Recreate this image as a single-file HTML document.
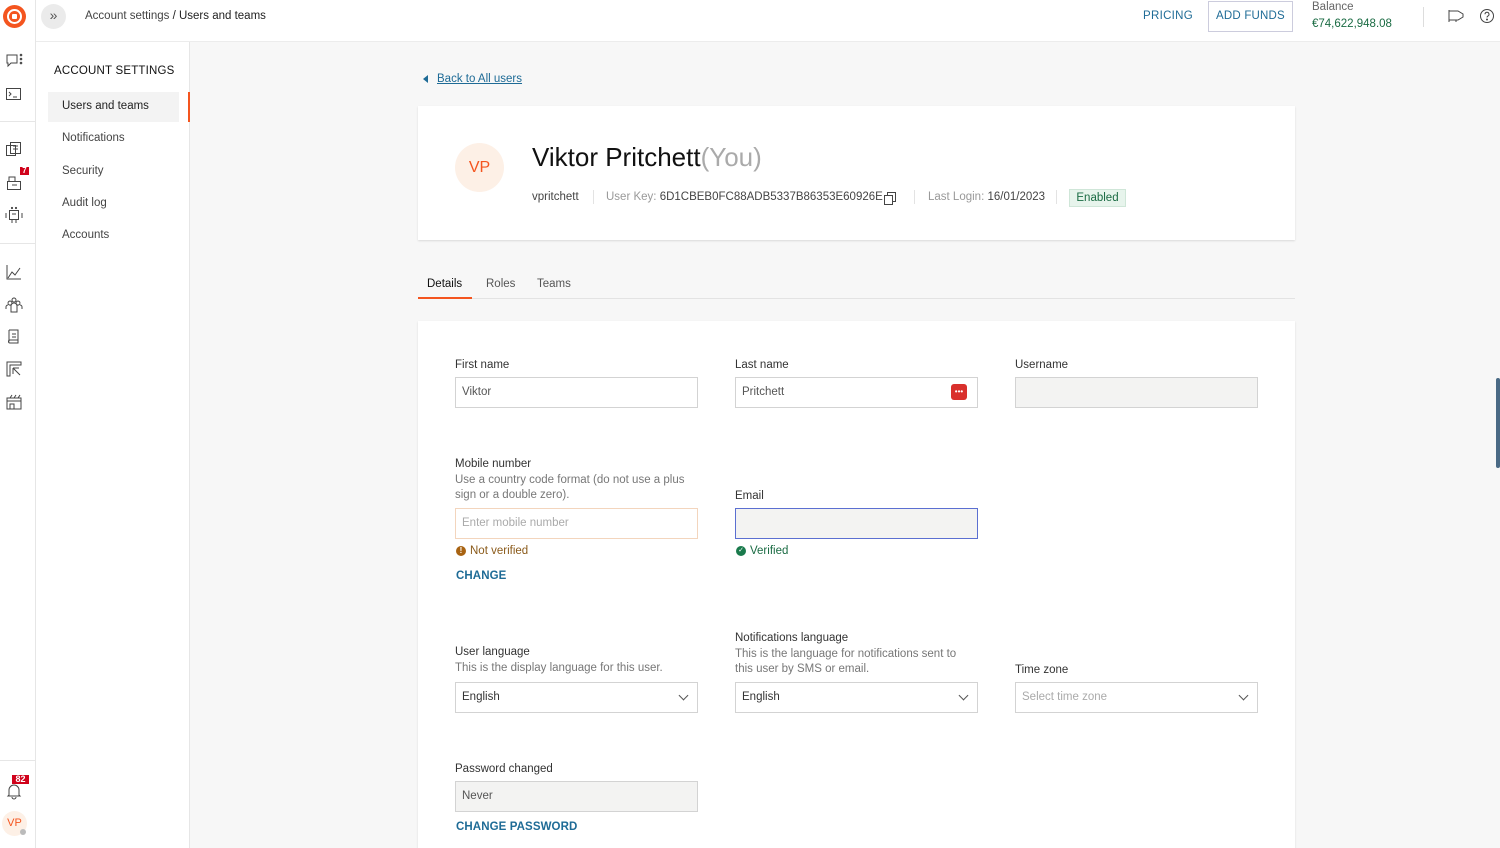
<!DOCTYPE html>
<html style="overflow:hidden"><head><meta charset="utf-8"><style>
*{box-sizing:border-box;margin:0;padding:0}
html,body{width:1500px;height:848px;overflow:hidden}
body{background:#f7f7f7;font-family:"Liberation Sans",sans-serif;color:#222;position:relative;font-size:11.5px}
.a{position:absolute}
.rail{left:0;top:0;width:36px;height:848px;background:#fff;border-right:1px solid #e6e6e6}
.top{left:36px;top:0;width:1464px;height:42px;background:#fff;border-bottom:1px solid #ececec}
.side{left:36px;top:42px;width:154px;height:806px;background:#fff;border-right:1px solid #e6e6e6}
.card{background:#fff;box-shadow:0 1px 2px rgba(0,0,0,.12)}
.lbl{font-size:11.5px;color:#333}
.hint{font-size:11.5px;color:#777;line-height:15px}
.inp{height:31px;border:1px solid #d3d3d3;background:#fff;font-size:11.5px;color:#555;padding:0 6px;line-height:29px}
.dis{background:#f3f3f2}
.link{color:#1e6b96;font-size:11.5px;font-weight:bold;letter-spacing:.1px}
.chev{position:absolute;right:10px;top:9px;width:7px;height:7px;border-right:1px solid #555;border-bottom:1px solid #555;transform:rotate(45deg)}
svg{position:absolute}
</style></head><body>
<div class="a rail"></div>
<div class="a top"></div>
<div class="a side"></div>
<div class="a" style="left:3px;top:5px;width:23px;height:23px;border-radius:50%;background:#f4551f"></div>
<div class="a" style="left:7px;top:9px;width:15px;height:15px;border-radius:50%;background:#fff"></div>
<div class="a" style="left:9px;top:11px;width:11px;height:11px;border-radius:50%;background:#f4551f"></div>
<div class="a" style="left:12px;top:14px;width:5px;height:5px;border-radius:1px;background:#fff"></div>
<svg style="left:5px;top:52px" width="20" height="18" fill="none" stroke="#444" stroke-width="1"><path d="M2 3h10v8H6l-3 3v-3H2z"/><circle cx="16" cy="3" r=".8"/><circle cx="16" cy="7" r=".8"/><circle cx="16" cy="11" r=".8"/></svg>
<svg style="left:5px;top:86px" width="18" height="16" fill="none" stroke="#444" stroke-width="1"><rect x="1.5" y="2.5" width="14" height="11"/><path d="M4 6l2 2-2 2M8 11h4"/></svg>
<div class="a" style="left:0;top:121px;width:35px;border-top:1px solid #e6e6e6"></div>
<svg style="left:5px;top:141px" width="18" height="18" fill="none" stroke="#444" stroke-width="1"><rect x="1.5" y="4.5" width="9" height="10"/><rect x="5.5" y="1.5" width="10" height="11"/><path d="M8 5h5M8 8h5"/></svg>
<svg style="left:5px;top:174px" width="18" height="18" fill="none" stroke="#444" stroke-width="1"><rect x="2.5" y="7.5" width="13" height="8"/><path d="M4 7V3h6v4M7 11h5"/></svg>
<div class="a" style="left:20px;top:167px;width:9px;height:8px;background:#d0021b;color:#fff;font-size:8px;font-weight:bold;line-height:8px;text-align:center">7</div>
<svg style="left:4px;top:205px" width="20" height="20" fill="none" stroke="#444" stroke-width="1"><rect x="5.5" y="5.5" width="9" height="9"/><path d="M2 8v5M18 8v5M8 15v3M12 15v3M8 9h4"/><circle cx="8" cy="3" r=".6"/><circle cx="12" cy="3" r=".6"/></svg>
<div class="a" style="left:0;top:243px;width:35px;border-top:1px solid #e6e6e6"></div>
<svg style="left:5px;top:263px" width="18" height="18" fill="none" stroke="#444" stroke-width="1"><path d="M2 2v14h14M3 15l4-6 3 3 5-7"/></svg>
<svg style="left:4px;top:296px" width="20" height="18" fill="none" stroke="#444" stroke-width="1"><circle cx="10" cy="4" r="2"/><path d="M7 16v-6a3 3 0 016 0v6zM4 7a2 2 0 110 .1M2 13v-2a2 2 0 012-2M16 7a2 2 0 100 .1M18 13v-2a2 2 0 00-2-2"/></svg>
<svg style="left:5px;top:328px" width="18" height="18" fill="none" stroke="#444" stroke-width="1"><path d="M4 2h9v13H5a1.5 1.5 0 010-3h8M4 2v11.5M7 6h4M7 9h4"/></svg>
<svg style="left:5px;top:360px" width="18" height="18" fill="none" stroke="#444" stroke-width="1"><path d="M2 2h14v3H5v11H2zM8 8h6M8 8v6M8 8l7 7"/></svg>
<svg style="left:5px;top:393px" width="18" height="18" fill="none" stroke="#444" stroke-width="1"><path d="M2 5h14v11H2zM2 8h14M5 16v-5h4v5M5 5l2-3M9 5l2-3M13 5l2-3"/></svg>
<div class="a" style="left:0;top:760px;width:35px;border-top:1px solid #e6e6e6"></div>
<svg style="left:6px;top:782px" width="16" height="18" fill="none" stroke="#444" stroke-width="1"><path d="M3 13V8a5 5 0 0110 0v5l1 1H2zM6 15a2 2 0 004 0"/></svg>
<div class="a" style="left:12px;top:775px;width:17px;height:9px;background:#d0021b;color:#fff;font-size:9px;font-weight:bold;line-height:9px;text-align:center">82</div>
<div class="a" style="left:2px;top:811px;width:25px;height:25px;border-radius:50%;background:#fdf0e6;color:#f4551f;font-size:11px;text-align:center;line-height:25px">VP</div>
<div class="a" style="left:20px;top:829px;width:6px;height:6px;border-radius:50%;background:#bbb"></div>
<div class="a" style="left:41px;top:4px;width:25px;height:25px;border-radius:50%;background:#ebebeb;color:#555;font-size:14px;text-align:center;line-height:23px">»</div>
<div class="a" style="left:85px;top:10px;font-size:11.5px;color:#444">Account settings <span style="color:#222">/ Users and teams</span></div>
<div class="a link" style="left:1143px;top:10px;font-weight:normal;letter-spacing:.3px">PRICING</div>
<div class="a" style="left:1208px;top:1px;width:85px;height:31px;border:1px solid #ccd;color:#1e6b96;font-size:11.5px;text-align:center;line-height:29px;letter-spacing:.2px">ADD FUNDS</div>
<div class="a" style="left:1312px;top:1px;font-size:11.5px;color:#666">Balance</div>
<div class="a" style="left:1312px;top:18px;font-size:11.5px;color:#1a6b43">€74,622,948.08</div>
<div class="a" style="left:1423px;top:7px;height:20px;border-left:1px solid #ddd"></div>
<svg style="left:1447px;top:8px" width="18" height="16" fill="none" stroke="#444" stroke-width="1"><path d="M2 2v12M2 3h9l5 3v3l-5 3H2M9 12v2"/></svg>
<svg style="left:1479px;top:8px" width="16" height="16" fill="none" stroke="#444" stroke-width="1"><circle cx="8" cy="8" r="6.5"/><path d="M6 6.3a2 2 0 113 1.7c-.8.4-1 .8-1 1.5"/><circle cx="8" cy="11.5" r=".5"/></svg>
<div class="a" style="left:54px;top:65px;font-size:11.5px;color:#111;letter-spacing:.2px">ACCOUNT SETTINGS</div>
<div class="a" style="left:48px;top:92px;width:131px;height:30px;background:#f3f3f3"></div>
<div class="a" style="left:188px;top:92px;width:2px;height:30px;background:#f4551f"></div>
<div class="a" style="left:62px;top:100px;color:#222">Users and teams</div>
<div class="a" style="left:62px;top:132px;color:#444">Notifications</div>
<div class="a" style="left:62px;top:165px;color:#444">Security</div>
<div class="a" style="left:62px;top:197px;color:#444">Audit log</div>
<div class="a" style="left:62px;top:229px;color:#444">Accounts</div>
<div class="a" style="left:423px;top:75px;width:0;height:0;border-top:4px solid transparent;border-bottom:4px solid transparent;border-right:5px solid #1e6b96"></div>
<div class="a" style="left:437px;top:73px;color:#1e6b96;text-decoration:underline">Back to All users</div>
<div class="a card" style="left:418px;top:106px;width:877px;height:134px"></div>
<div class="a" style="left:455px;top:143px;width:49px;height:49px;border-radius:50%;background:#fdf0e6;color:#f4551f;font-size:16px;text-align:center;line-height:49px">VP</div>
<div class="a" style="left:532px;top:142px;font-size:26px;color:#111">Viktor Pritchett<span style="color:#aaa">(You)</span></div>
<div class="a" style="left:532px;top:191px;color:#444">vpritchett</div>
<div class="a" style="left:593px;top:190px;height:14px;border-left:1px solid #e3e3e3"></div>
<div class="a" style="left:606px;top:191px;color:#999">User Key: <span style="color:#444">6D1CBEB0FC88ADB5337B86353E60926E</span></div>
<svg style="left:882px;top:190px" width="16" height="16" fill="none" stroke="#444" stroke-width="1"><rect x="2.5" y="5.5" width="8" height="9"/><path d="M5.5 5V2.5h8v9H11"/></svg>
<div class="a" style="left:914px;top:190px;height:14px;border-left:1px solid #e3e3e3"></div>
<div class="a" style="left:928px;top:191px;color:#999">Last Login: <span style="color:#444">16/01/2023</span></div>
<div class="a" style="left:1056px;top:190px;height:14px;border-left:1px solid #e3e3e3"></div>
<div class="a" style="left:1069px;top:189px;width:57px;height:18px;background:#e7f4ec;border:1px solid #cfe6d8;color:#1a6b43;font-size:11.5px;text-align:center;line-height:16px">Enabled</div>
<div class="a" style="left:418px;top:298px;width:877px;border-top:1px solid #e3e3e3"></div>
<div class="a" style="left:427px;top:278px;color:#111">Details</div>
<div class="a" style="left:418px;top:297px;width:54px;height:2px;background:#f4551f"></div>
<div class="a" style="left:486px;top:278px;color:#555">Roles</div>
<div class="a" style="left:537px;top:278px;color:#555">Teams</div>
<div class="a card" style="left:418px;top:321px;width:877px;height:527px"></div>
<div class="a lbl" style="left:455px;top:359px">First name</div>
<div class="a inp" style="left:455px;top:377px;width:243px">Viktor</div>
<div class="a lbl" style="left:735px;top:359px">Last name</div>
<div class="a inp" style="left:735px;top:377px;width:243px">Pritchett</div>
<div class="a" style="left:951px;top:384px;width:16px;height:16px;border-radius:3px;background:#d9302c;color:#fff;font-size:8px;line-height:15px;text-align:center">•••</div>
<div class="a lbl" style="left:1015px;top:359px">Username</div>
<div class="a inp dis" style="left:1015px;top:377px;width:243px"></div>
<div class="a lbl" style="left:455px;top:458px">Mobile number</div>
<div class="a hint" style="left:455px;top:473px;width:240px">Use a country code format (do not use a plus sign or a double zero).</div>
<div class="a inp" style="left:455px;top:508px;width:243px;border-color:#f3d5bd;color:#aaa">Enter mobile number</div>
<div class="a" style="left:456px;top:546px;width:10px;height:10px;border-radius:50%;background:#a86312;color:#fff;font-size:8px;font-weight:bold;text-align:center;line-height:10px">!</div>
<div class="a" style="left:470px;top:545px;color:#8a5a1a">Not verified</div>
<div class="a link" style="left:456px;top:570px">CHANGE</div>
<div class="a lbl" style="left:735px;top:490px">Email</div>
<div class="a inp dis" style="left:735px;top:508px;width:243px;border-color:#5b6fd1"></div>
<div class="a" style="left:736px;top:546px;width:10px;height:10px;border-radius:50%;background:#1a7a4c;color:#fff;font-size:7px;text-align:center;line-height:10px">✓</div>
<div class="a" style="left:750px;top:545px;color:#1a6b43">Verified</div>
<div class="a lbl" style="left:455px;top:646px">User language</div>
<div class="a hint" style="left:455px;top:661px">This is the display language for this user.</div>
<div class="a inp" style="left:455px;top:682px;width:243px;color:#333">English<span class="chev"></span></div>
<div class="a lbl" style="left:735px;top:632px">Notifications language</div>
<div class="a hint" style="left:735px;top:647px;width:230px">This is the language for notifications sent to this user by SMS or email.</div>
<div class="a inp" style="left:735px;top:682px;width:243px;color:#333">English<span class="chev"></span></div>
<div class="a lbl" style="left:1015px;top:664px">Time zone</div>
<div class="a inp" style="left:1015px;top:682px;width:243px;color:#aaa">Select time zone<span class="chev"></span></div>
<div class="a lbl" style="left:455px;top:763px">Password changed</div>
<div class="a inp dis" style="left:455px;top:781px;width:243px;color:#555">Never</div>
<div class="a link" style="left:456px;top:821px">CHANGE PASSWORD</div>
<div class="a" style="left:1496px;top:378px;width:4px;height:90px;background:#4a6a85;border-radius:2px"></div>
</body></html>
